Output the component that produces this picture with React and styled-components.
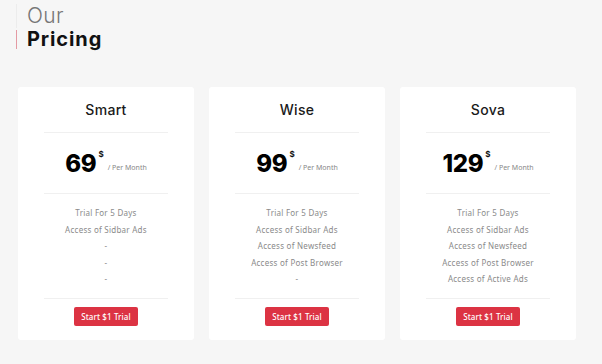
import React from 'react';
import styled, { createGlobalStyle } from 'styled-components';

const GlobalStyle = createGlobalStyle`
    html, body {
        margin: 0;
        padding: 0;
        background: #f6f6f6;
    }
    body {
        font-family: Inter, "Open Sans", sans-serif;
        color: #111;
    }
`;

const Page = styled.div`
    width: 602px;
    height: 364px;
    padding: 4px 26px 0 18px;
    box-sizing: border-box;
    overflow: hidden;
`;

const Heading = styled.div`
    display: flex;
    flex-direction: column;
    margin-left: -2px;
`;

const HeadLine = styled.div`
    padding-left: 10px;
    border-left: 1px solid ${props => props.accent ? '#e49aa3' : '#ececec'};
    font-family: Inter, sans-serif;
    line-height: ${props => props.accent ? '19px' : '24px'};
    height: ${props => props.accent ? '19px' : '24px'};
    font-size: ${props => props.accent ? '20px' : '21px'};
    font-weight: ${props => props.accent ? 700 : 300};
    color: ${props => props.accent ? '#111' : '#777'};
    letter-spacing: ${props => props.accent ? '0.9px' : '0.4px'};
    margin-top: ${props => props.accent ? '2px' : '0'};
`;

const Plans = styled.div`
    display: grid;
    grid-template-columns: repeat(3, 176px);
    gap: 15px;
    margin-top: 38px;
`;

const Card = styled.div`
    background: #fff;
    border-radius: 3px;
    height: 253px;
    padding: 0 26px;
    display: flex;
    flex-direction: column;
    align-items: stretch;
`;

const Title = styled.div`
    height: 45px;
    display: flex;
    align-items: center;
    justify-content: center;
    font-size: 14px;
    font-weight: 500;
    letter-spacing: 0.3px;
    color: #1a1a1a;
    border-bottom: 1px solid #f0f0f0;
`;

const PriceRow = styled.div`
    height: 60px;
    display: flex;
    justify-content: center;
    align-items: center;
    border-bottom: 1px solid #f0f0f0;
`;

const Amount = styled.span`
    font-size: 24px;
    font-weight: 800;
    color: #000;
    letter-spacing: -0.3px;
`;

const Currency = styled.sup`
    font-size: 8px;
    font-weight: 700;
    align-self: flex-start;
    margin-top: 16px;
    margin-left: 2px;
`;

const Period = styled.span`
    font-family: "Noto Sans", sans-serif;
    font-size: 7px;
    color: #888;
    margin-left: 4px;
    margin-top: 8px;
`;

const Features = styled.ul`
    list-style: none;
    margin: 0;
    padding: 11px 0 0;
    height: 105px;
    box-sizing: border-box;
    border-bottom: 1px solid #f0f0f0;
`;

const Feature = styled.li`
    font-family: "Noto Sans", sans-serif;
    font-size: 8px;
    letter-spacing: 0.25px;
    line-height: 16.5px;
    color: #8a8a8a;
    text-align: center;
`;

const Footer = styled.div`
    display: flex;
    justify-content: center;
    padding-top: 8px;
`;

const TrialButton = styled.button`
    height: 19px;
    padding: 0 7px;
    border: none;
    border-radius: 2px;
    background: #dc3343;
    color: #fff;
    font-family: "Noto Sans", sans-serif;
    font-size: 8px;
    font-weight: 500;
    letter-spacing: 0.1px;
    cursor: pointer;
`;

const plans = [
    { name: 'Smart', price: 69, features: ['Trial For 5 Days', 'Access of Sidbar Ads', '-', '-', '-'] },
    { name: 'Wise', price: 99, features: ['Trial For 5 Days', 'Access of Sidbar Ads', 'Access of Newsfeed', 'Access of Post Browser', '-'] },
    { name: 'Sova', price: 129, features: ['Trial For 5 Days', 'Access of Sidbar Ads', 'Access of Newsfeed', 'Access of Post Browser', 'Access of Active Ads'] },
];

const App = () => (
    <Page>
        <GlobalStyle />
        <Heading>
            <HeadLine>Our</HeadLine>
            <HeadLine accent>Pricing</HeadLine>
        </Heading>

        <Plans>
            {plans.map(plan => (
                <Card key={plan.name}>
                    <Title>{plan.name}</Title>
                    <PriceRow>
                        <Amount>{plan.price}</Amount>
                        <Currency>$</Currency>
                        <Period>/ Per Month</Period>
                    </PriceRow>
                    <Features>
                        {plan.features.map((f, i) => <Feature key={i}>{f}</Feature>)}
                    </Features>
                    <Footer>
                        <TrialButton>Start $1 Trial</TrialButton>
                    </Footer>
                </Card>
            ))}
        </Plans>
    </Page>
);

export default App;
